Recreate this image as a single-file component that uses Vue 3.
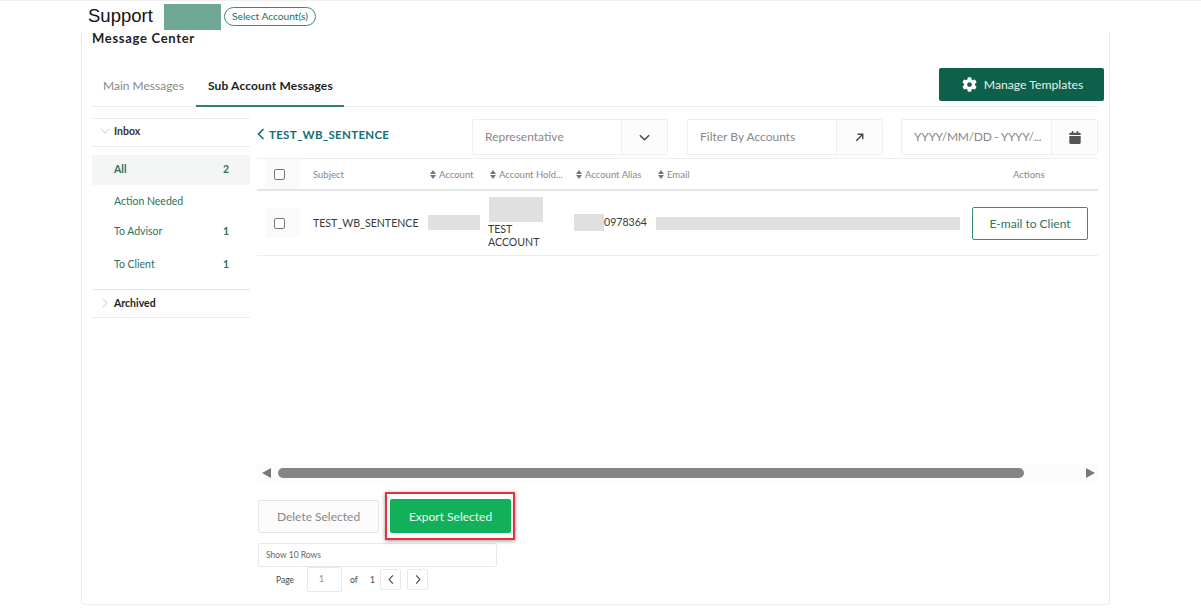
<template>
  <div class="page">
    <header class="top-bar">
      <h1 class="page-title">Support</h1>
      <div class="account-mask"></div>
      <button class="btn-pill">Select Account(s)</button>
    </header>

    <section class="card">
      <h2 class="card-title">Message Center</h2>

      <div class="tabs-row">
        <div class="tabs">
          <span class="tab">Main Messages</span>
          <span class="tab active">Sub Account Messages</span>
        </div>
        <button class="btn-manage">
          <svg class="gear" viewBox="0 0 512 512"><path fill="#fff" d="M487.4 315.7l-42.6-24.6c4.3-23.2 4.3-47 0-70.2l42.6-24.6c4.9-2.8 7.1-8.6 5.5-14-11.1-35.6-30-67.8-54.7-94.6-3.8-4.1-10-5.1-14.8-2.3L380.8 110c-17.9-15.4-38.5-27.3-60.8-35.1V25.8c0-5.6-3.9-10.5-9.4-11.7-36.7-8.2-74.3-7.8-109.2 0-5.5 1.2-9.4 6.1-9.4 11.7V75c-22.2 7.9-42.8 19.8-60.8 35.1L88.7 85.5c-4.9-2.8-11-1.9-14.8 2.3-24.7 26.7-43.6 58.9-54.7 94.6-1.7 5.4.6 11.2 5.5 14L67.3 221c-4.3 23.2-4.3 47 0 70.2l-42.6 24.6c-4.9 2.8-7.1 8.6-5.5 14 11.1 35.6 30 67.8 54.7 94.6 3.8 4.1 10 5.1 14.8 2.3l42.6-24.6c17.9 15.4 38.5 27.3 60.8 35.1v49.2c0 5.6 3.9 10.5 9.4 11.7 36.7 8.2 74.3 7.8 109.2 0 5.5-1.2 9.4-6.1 9.4-11.7v-49.2c22.2-7.9 42.8-19.8 60.8-35.1l42.6 24.6c4.9 2.8 11 1.9 14.8-2.3 24.7-26.7 43.6-58.9 54.7-94.6 1.500-5.500-.7-11.300-5.600-14.100zM256 336c-44.100 0-80-35.900-80-80s35.900-80 80-80 80 35.900 80 80-35.900 80-80 80z"/></svg>
          Manage Templates
        </button>
      </div>

      <div class="content">
        <aside class="sidebar">
          <div class="side-head first">
            <svg class="caret" viewBox="0 0 12 12"><path d="M1 3.5l5 5 5-5" /></svg>
            Inbox
          </div>
          <div class="side-list">
            <div
              v-for="item in folders"
              :key="item.name"
              class="side-item"
              :class="{ selected: item.selected }"
              :style="{ height: item.height + 'px' }"
            >
              <span>{{ item.name }}</span>
              <span class="count">{{ item.count }}</span>
            </div>
          </div>
          <div class="side-head last">
            <svg class="caret" viewBox="0 0 12 12"><path d="M3.5 1l5 5-5 5" /></svg>
            Archived
          </div>
        </aside>

        <main class="main">
          <div class="toolbar">
            <a class="back-link">
              <svg class="back-icon" viewBox="0 0 8 12"><path d="M6.5 1L1.5 6l5 5" /></svg>
              TEST_WB_SENTENCE
            </a>
            <div class="filters">
              <div class="filter">
                <span class="filter-text">Representative</span>
                <span class="filter-btn">
                  <svg class="ico" viewBox="0 0 14 14"><path d="M2 4.5l5 5 5-5" /></svg>
                </span>
              </div>
              <div class="filter">
                <span class="filter-text">Filter By Accounts</span>
                <span class="filter-btn">
                  <svg class="ico" viewBox="0 0 14 14"><path d="M3.5 10.5L10.5 3.5M5 3.5h5.500V9" /></svg>
                </span>
              </div>
              <div class="filter">
                <span class="filter-text date">YYYY/MM/DD - YYYY/...</span>
                <span class="filter-btn">
                  <svg class="cal" viewBox="0 0 448 512"><path fill="#555" d="M0 464c0 26.5 21.5 48 48 48h352c26.500 0 48-21.500 48-48V192H0v272zM400 64h-48V16c0-8.800-7.200-16-16-16h-32c-8.800 0-16 7.200-16 16v48H160V16c0-8.800-7.200-16-16-16h-32c-8.800 0-16 7.200-16 16v48H48C21.500 64 0 85.500 0 112v48h448v-48c0-26.500-21.500-48-48-48z"/></svg>
                </span>
              </div>
            </div>
          </div>

          <div class="table-head grid-row">
            <div class="check-cell"><span class="checkbox"></span></div>
            <div>Subject</div>
            <div class="th-sort"><i class="sort"></i>Account</div>
            <div class="th-sort"><i class="sort"></i>Account Hold...</div>
            <div class="th-sort"><i class="sort"></i>Account Alias</div>
            <div class="th-sort"><i class="sort"></i>Email</div>
            <div class="th-actions">Actions</div>
          </div>

          <div class="table-row grid-row">
            <div class="check-cell"><span class="checkbox"></span></div>
            <div>TEST_WB_SENTENCE</div>
            <div><div class="mask mask-account"></div></div>
            <div class="holder">
              <div class="mask mask-holder"></div>
              <div class="holder-name">TEST ACCOUNT</div>
            </div>
            <div class="alias"><div class="mask mask-alias"></div>0978364</div>
            <div><div class="mask mask-email"></div></div>
            <div class="row-actions"><button class="btn-outline">E-mail to Client</button></div>
          </div>

          <div class="table-space"></div>

          <div class="scrollbar">
            <i class="arrow left"></i>
            <div class="scroll-track"><div class="scroll-thumb"></div></div>
            <i class="arrow right"></i>
          </div>

          <div class="bulk-actions">
            <button class="btn-delete">Delete Selected</button>
            <div class="highlight">
              <button class="btn-export">Export Selected</button>
            </div>
          </div>

          <div class="rows-select">Show 10 Rows</div>

          <div class="pager">
            <span class="pager-label">Page</span>
            <span class="page-input">1</span>
            <span class="pager-of">of</span>
            <span class="pager-total">1</span>
            <button class="page-btn">
              <svg viewBox="0 0 8 12"><path d="M6 1.500L2 6l4 4.500" /></svg>
            </button>
            <button class="page-btn">
              <svg viewBox="0 0 8 12"><path d="M2 1.500L6 6l-4 4.500" /></svg>
            </button>
          </div>
        </main>
      </div>
    </section>
  </div>
</template>

<script setup>
const folders = [
  { name: 'All', count: 2, selected: true, height: 30 },
  { name: 'Action Needed', count: '', height: 32 },
  { name: 'To Advisor', count: 1, height: 28 },
  { name: 'To Client', count: 1, height: 38 },
]
</script>

<style>
html, body {
  margin: 0;
  background: #fff;
}
</style>

<style scoped>
.page {
  width: 1201px;
  height: 611px;
  overflow: hidden;
  background: #fff;
  border-top: 1px solid #f0f0f0;
  box-sizing: border-box;
  font-family: Lato, "Open Sans", sans-serif;
  color: #333;
}

.top-bar {
  display: flex;
  align-items: center;
  height: 30px;
  padding-left: 88px;
}

.page-title {
  margin: 0 10px 0 0;
  width: 66px;
  font: 400 18.5px "Liberation Sans", sans-serif;
  color: #111;
}

.account-mask {
  width: 57px;
  height: 26px;
  margin-top: 1px;
  background: #6fa896;
}

.btn-pill {
  margin-left: 3px;
  width: 92px;
  height: 19px;
  padding: 0;
  border: 1px solid #3c8a74;
  border-radius: 10px;
  background: #fff;
  color: #17705a;
  font: 400 10.2px Lato, sans-serif;
}

.card {
  width: 1029px;
  height: 574px;
  margin-left: 81px;
  padding: 0 11px 0 10px;
  box-sizing: border-box;
  border: 1px solid #ececec;
  border-top: none;
  border-radius: 0 0 4px 4px;
}

.card-title {
  margin: 0;
  height: 22px;
  font: 700 13px/15px Lato, sans-serif;
  letter-spacing: 0.7px;
  color: #222;
}

.tabs-row {
  display: flex;
  justify-content: space-between;
  height: 54px;
  padding-top: 15px;
  box-sizing: border-box;
  border-bottom: 1px solid #eee;
  margin-bottom: 12px;
}

.tabs {
  display: flex;
}

.tab {
  padding: 10px 12px 0 11px;
  font-size: 12px;
  line-height: 15px;
  color: #888;
}

.tab.active {
  margin-bottom: -1px;
  padding-left: 12px;
  padding-right: 11px;
  border-bottom: 2px solid #2f7f6a;
  font-weight: 700;
  letter-spacing: 0.15px;
  color: #222;
}

.btn-manage {
  display: flex;
  align-items: center;
  justify-content: center;
  width: 165px;
  height: 33px;
  margin-right: -6px;
  padding: 0 0 0 2px;
  border: none;
  border-radius: 2px;
  background: #0d6049;
  color: #e8f2ef;
  font: 400 12.2px Lato, sans-serif;
}

.gear {
  width: 15px;
  height: 15px;
  margin-right: 7px;
}

.content {
  display: flex;
  gap: 7px;
}

.sidebar {
  width: 158px;
  flex: none;
  margin-top: -1px;
}

.side-head {
  display: flex;
  align-items: center;
  height: 29px;
  padding: 0 0 2px 8px;
  box-sizing: border-box;
  font-weight: 700;
  font-size: 10.5px;
  color: #333;
}

.side-head.first {
  padding-bottom: 3px;
  border-top: 1px solid #eee;
  border-bottom: 1px solid #eee;
}

.side-head.last {
  border-top: 1px solid #e6e6e6;
  border-bottom: 1px solid #eee;
  color: #222;
}

.caret {
  width: 10px;
  height: 10px;
  margin-right: 4px;
  fill: none;
  stroke: #bbb;
  stroke-width: 1;
}

.side-list {
  padding-top: 8px;
  height: 142px;
  box-sizing: border-box;
}

.side-item {
  display: flex;
  align-items: center;
  justify-content: space-between;
  padding: 0 21px 0 22px;
  box-sizing: border-box;
  font-size: 10.5px;
  color: #2e6f5d;
}

.side-item.selected {
  padding-bottom: 3px;
  background: #f3f6f4;
  font-weight: 700;
}

.count {
  font-weight: 700;
}

.main {
  width: 841px;
  flex: none;
}

.toolbar {
  display: flex;
  justify-content: space-between;
  height: 36px;
  margin-bottom: 3px;
}

.back-link {
  display: flex;
  align-items: center;
  height: 30px;
  font-weight: 700;
  font-size: 11.5px;
  letter-spacing: 0.3px;
  color: #117077;
}

.back-icon {
  width: 8px;
  height: 12px;
  margin-right: 4px;
  fill: none;
  stroke: #117077;
  stroke-width: 1.6;
}

.filters {
  display: flex;
  gap: 19px;
}

.filter {
  display: flex;
  width: 196px;
  height: 36px;
  box-sizing: border-box;
  border: 1px solid #eee;
  border-radius: 2px;
}

.filter:last-child {
  width: 197px;
  margin-left: -1px;
}

.filter-text {
  flex: 1;
  padding-left: 12px;
  line-height: 34px;
  font-size: 12px;
  color: #888;
  white-space: nowrap;
}

.filter-text.date {
  letter-spacing: -0.3px;
}

.filter-btn {
  display: flex;
  align-items: center;
  justify-content: center;
  width: 45px;
  border-left: 1px solid #eee;
  background: #fcfcfc;
}

.ico {
  width: 13px;
  height: 13px;
  fill: none;
  stroke: #444;
  stroke-width: 1.5;
}

.cal {
  width: 12px;
  height: 13px;
}

.grid-row {
  display: grid;
  grid-template-columns: 56px 115px 60px 86px 82px 316px 126px;
  align-items: center;
}

.table-head {
  height: 33px;
  box-sizing: border-box;
  border-top: 1px solid #eee;
  border-bottom: 2px solid #e4e4e4;
  font-size: 9.5px;
  color: #888;
}

.check-cell {
  display: flex;
  align-items: center;
  width: 35px;
  height: 30px;
  margin-left: 8px;
  padding-left: 9px;
  box-sizing: border-box;
  background: #fafafa;
}

.checkbox {
  width: 9px;
  height: 9px;
  border: 1px solid #777;
  border-radius: 2px;
  background: #fff;
}

.th-sort {
  display: flex;
  align-items: center;
  padding-left: 2px;
  white-space: nowrap;
}

.sort {
  position: relative;
  width: 6px;
  height: 9px;
  margin-right: 3px;
}

.sort::before,
.sort::after {
  content: "";
  position: absolute;
  left: 0;
  border-left: 3px solid transparent;
  border-right: 3px solid transparent;
}

.sort::before {
  top: 0;
  border-bottom: 4px solid #777;
}

.sort::after {
  bottom: 0;
  border-top: 4px solid #777;
}

.th-actions {
  padding-left: 41px;
}

.table-row {
  height: 65px;
  box-sizing: border-box;
  border-bottom: 1px solid #eee;
  font-size: 10.6px;
  color: #3a3a3a;
}

.mask {
  background: #e0e0e0;
}

.mask-account {
  width: 52px;
  height: 15px;
  margin-top: -1px;
}

.mask-holder {
  width: 54px;
  height: 25px;
}

.holder {
  margin-left: 1px;
}

.holder-name {
  width: 50px;
  margin-top: 1px;
  margin-left: -1px;
  line-height: 13px;
}

.alias {
  display: flex;
  align-items: center;
  margin-top: -2px;
}

.mask-alias {
  width: 30px;
  height: 17px;
  flex: none;
}

.mask-email {
  width: 304px;
  height: 13px;
  margin-top: 1px;
}

.btn-outline {
  width: 116px;
  height: 33px;
  border: 1px solid #3c8a74;
  border-radius: 2px;
  background: #fff;
  color: #2b7460;
  font: 400 12px Lato, sans-serif;
}

.table-space {
  height: 208px;
}

.scrollbar {
  display: flex;
  align-items: center;
  height: 18px;
  padding-left: 5px;
  background: #fcfcfc;
}

.scroll-track {
  flex: 1;
  padding: 0 62px 0 7px;
}

.scroll-thumb {
  height: 10px;
  border-radius: 5px;
  background: #858585;
}

.arrow {
  width: 0;
  height: 0;
  border-top: 5px solid transparent;
  border-bottom: 5px solid transparent;
}

.arrow.left {
  border-right: 9px solid #777;
}

.arrow.right {
  margin-right: 3px;
  border-left: 9px solid #777;
}

.bulk-actions {
  display: flex;
  align-items: center;
  height: 48px;
  margin-top: 10px;
}

.btn-delete {
  width: 121px;
  height: 33px;
  margin-left: 1px;
  margin-right: 6px;
  border: 1px solid #e6e6e6;
  border-radius: 2px;
  background: #fcfcfc;
  color: #888;
  font: 400 12px Lato, sans-serif;
}

.highlight {
  padding: 5px 2px 5px 3px;
  border: 2px solid #e8303c;
  box-shadow: 0 1px 4px rgba(0, 0, 0, 0.4);
}

.btn-export {
  display: block;
  width: 121px;
  height: 34px;
  border: none;
  border-radius: 2px;
  background: #12b05a;
  color: #e9f9f0;
  font: 400 12px Lato, sans-serif;
}

.rows-select {
  width: 239px;
  height: 24px;
  margin: 3px 0 0 1px;
  padding-left: 7px;
  box-sizing: border-box;
  border: 1px solid #e8e8e8;
  border-radius: 2px;
  line-height: 22px;
  font-size: 8.5px;
  color: #666;
}

.pager {
  display: flex;
  align-items: center;
  height: 25px;
  padding-left: 19px;
  font-size: 8.5px;
  color: #444;
}

.pager-label {
  width: 31px;
}

.page-input {
  width: 35px;
  height: 25px;
  box-sizing: border-box;
  border: 1px solid #e8e8e8;
  border-radius: 2px;
  padding-left: 11px;
  line-height: 23px;
  color: #888;
}

.pager-of {
  margin-left: 8px;
  width: 20px;
}

.pager-total {
  width: 10px;
}

.page-btn {
  display: flex;
  align-items: center;
  justify-content: center;
  width: 21px;
  height: 21px;
  margin-right: 6px;
  padding: 0;
  border: 1px solid #e8e8e8;
  border-radius: 2px;
  background: #fff;
}

.page-btn svg {
  width: 8px;
  height: 11px;
  fill: none;
  stroke: #444;
  stroke-width: 1.2;
}
</style>
